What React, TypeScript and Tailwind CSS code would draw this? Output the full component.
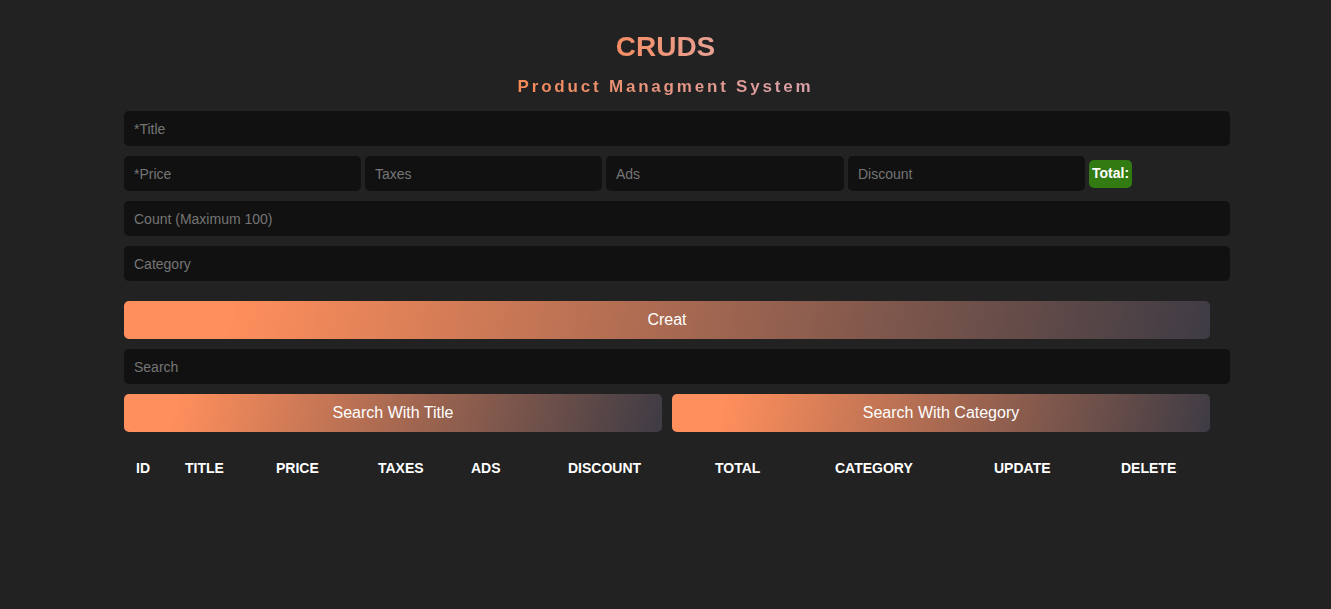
export default function App() {
  const inputCls =
    'h-[35px] w-full rounded-[5px] bg-[#111111] px-[10px] text-[14px] text-white placeholder:text-[#757575] outline-none';
  const btnCls =
    'h-[38px] rounded-[5px] bg-[linear-gradient(105deg,#ff8f5c_10%,#3e3b44_100%)] text-[16px] text-white';
  const cols = [
    { name: 'ID', w: 'w-[49px]' },
    { name: 'TITLE', w: 'w-[91px]' },
    { name: 'PRICE', w: 'w-[102px]' },
    { name: 'TAXES', w: 'w-[93px]' },
    { name: 'ADS', w: 'w-[97px]' },
    { name: 'DISCOUNT', w: 'w-[147px]' },
    { name: 'TOTAL', w: 'w-[120px]' },
    { name: 'CATEGORY', w: 'w-[159px]' },
    { name: 'UPDATE', w: 'w-[127px]' },
    { name: 'DELETE', w: 'w-auto' },
  ];

  return (
    <div className="min-h-[609px] w-full bg-[#222222] font-['Liberation_Sans',Arial,sans-serif]">
      {/* header */}
      <div className="flex flex-col items-center pt-[29px]">
        <h1 className="bg-[linear-gradient(90deg,#f58d64,#e8a193)] bg-clip-text text-[28px] font-bold leading-[36px] text-transparent">
          CRUDS
        </h1>
        <h2 className="mt-[11px] bg-[linear-gradient(90deg,#f58a58,#d9a1ab)] bg-clip-text text-[17px] font-bold leading-[22px] tracking-[2.8px] text-transparent">
          Product Managment System
        </h2>
      </div>

      <div className="ml-[124px] mt-[13px] w-[1106px]">
        <div className="flex flex-col gap-[10px]">
          <input className={inputCls} placeholder="*Title" />
          <div className="flex items-center gap-[4px]">
            <input className={inputCls + ' !w-[237px]'} placeholder="*Price" />
            <input className={inputCls + ' !w-[237px]'} placeholder="Taxes" />
            <input className={inputCls + ' !w-[238px]'} placeholder="Ads" />
            <input className={inputCls + ' !w-[237px]'} placeholder="Discount" />
            <span className="flex h-[28px] items-center rounded-[5px] bg-[#327a12] px-[3px] text-[14px] font-bold text-white">
              Total:
            </span>
          </div>
          <input className={inputCls} placeholder="Count (Maximum 100)" />
          <input className={inputCls} placeholder="Category" />
        </div>

        <button className={btnCls + ' mt-[20px] w-[1086px]'}>Creat</button>

        <input className={inputCls + ' mt-[10px]'} placeholder="Search" />

        <div className="mt-[10px] flex w-[1086px] gap-[10px]">
          <button className={btnCls + ' flex-1'}>Search With Title</button>
          <button className={btnCls + ' flex-1'}>Search With Category</button>
        </div>

        <table className="mt-[26px] w-full table-fixed">
          <thead>
            <tr>
              {cols.map((c) => (
                <th
                  key={c.name}
                  className={c.w + ' pl-[12px] text-left text-[14px] font-bold leading-[20px] text-white'}
                >
                  {c.name}
                </th>
              ))}
            </tr>
          </thead>
        </table>
      </div>
    </div>
  );
}
